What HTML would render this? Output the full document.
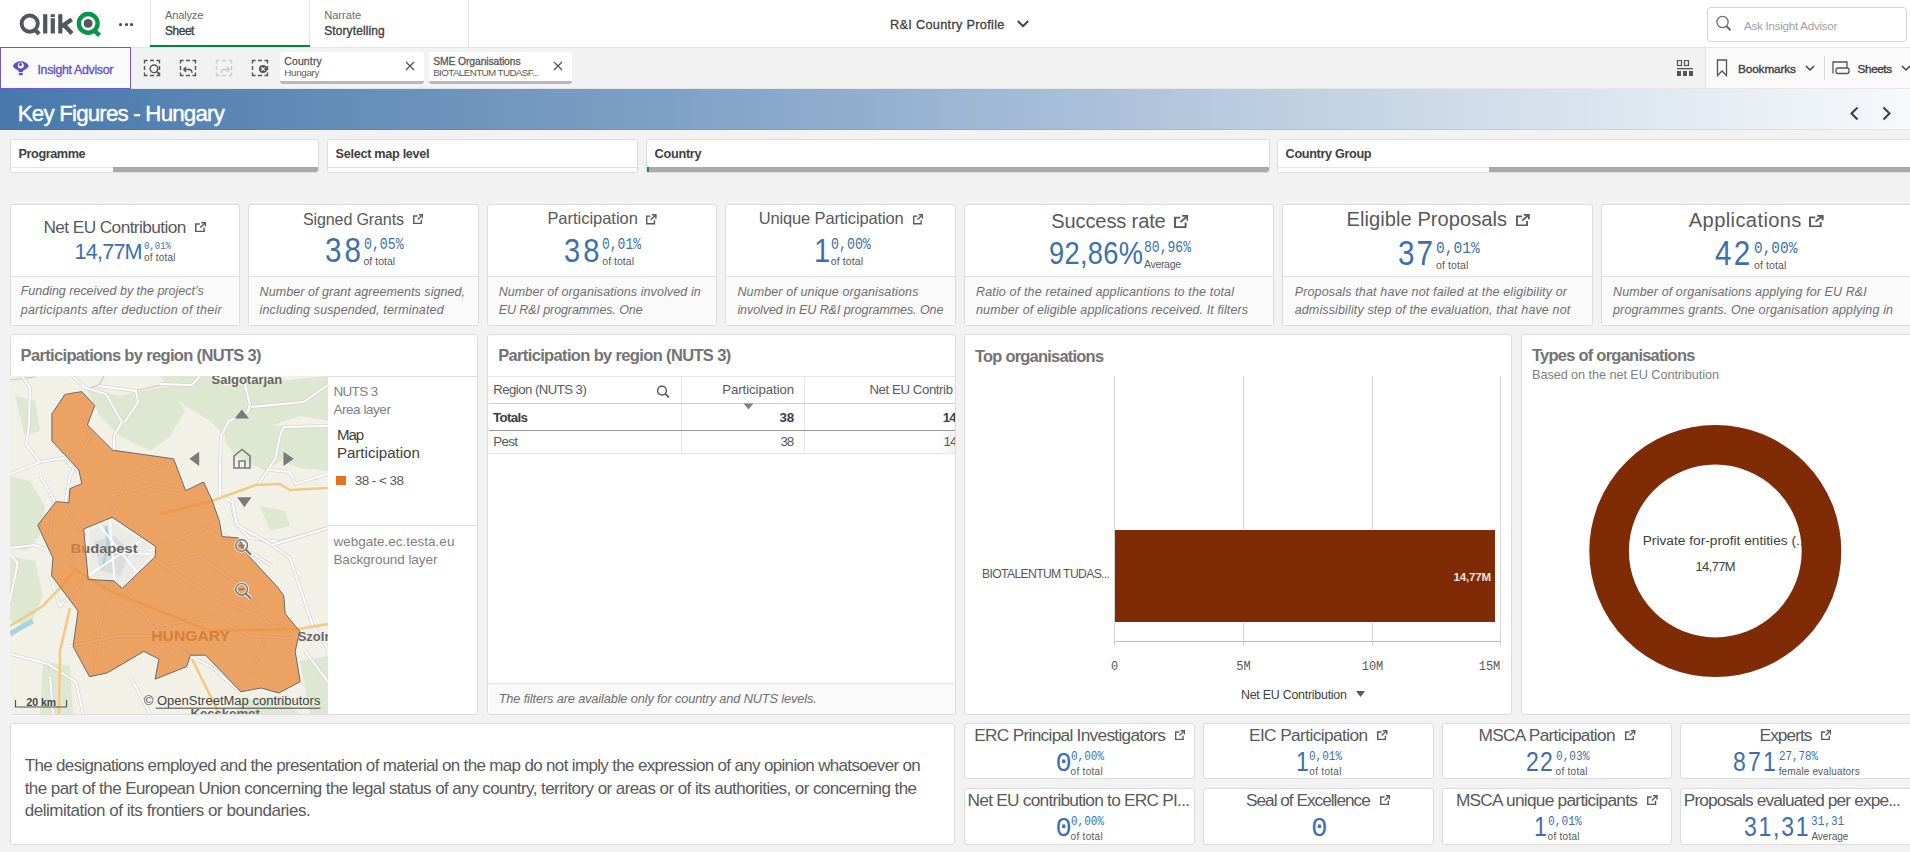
<!DOCTYPE html>
<html><head><meta charset="utf-8">
<style>
*{box-sizing:border-box;margin:0;padding:0}
html,body{width:1910px;height:852px;overflow:hidden;background:#f2f2f2;font-family:"Liberation Sans",sans-serif;color:#404040}
.a{position:absolute}
.t{white-space:nowrap}
.card{background:#fff;border:1px solid #dcdcdc;border-radius:3px;overflow:hidden}
</style></head><body>
<div class="a" style="left:0px;top:0px;width:1910px;height:47px;background:#fff"></div>
<div class="a" style="left:0px;top:47px;width:1910px;height:1px;background:#e3e3e3"></div>
<svg class="a" style="left:0;top:0" width="110" height="45" viewBox="0 0 110 45">
<circle cx="29.7" cy="23.6" r="8.1" fill="none" stroke="#54565b" stroke-width="3.9"/>
<path d="M34.5 29.5 L39.2 34" stroke="#54565b" stroke-width="4.2"/>
<rect x="43.1" y="14.2" width="4.2" height="19.3" fill="#54565b"/>
<rect x="50.7" y="14.2" width="4.2" height="2.8" fill="#54565b"/>
<rect x="50.7" y="18.2" width="4.2" height="15.3" fill="#54565b"/>
<rect x="58.2" y="14.2" width="4.2" height="19.3" fill="#54565b"/>
<path d="M61.5 26.5 L71.8 19.4 M63.8 24.8 L72 33.5" stroke="#54565b" stroke-width="4.3"/>
<circle cx="88.2" cy="23.4" r="9.35" fill="none" stroke="#009845" stroke-width="4.4"/>
<circle cx="88.1" cy="23.4" r="4.4" fill="#54565b"/>
<path d="M93.8 30.2 L99.6 35.4" stroke="#009845" stroke-width="4.4"/>
<circle cx="100.3" cy="15.5" r="1" fill="none" stroke="#ccc" stroke-width="0.4"/>
</svg>
<div class="a" style="left:119px;top:22.5px;width:3px;height:3px;border-radius:2px;background:#404040"></div>
<div class="a" style="left:124.5px;top:22.5px;width:3px;height:3px;border-radius:2px;background:#404040"></div>
<div class="a" style="left:130px;top:22.5px;width:3px;height:3px;border-radius:2px;background:#404040"></div>
<div class="a" style="left:150px;top:0px;width:1px;height:47px;background:#e6e6e6"></div>
<div class="a" style="left:309px;top:0px;width:1px;height:47px;background:#e6e6e6"></div>
<div class="a" style="left:468px;top:0px;width:1px;height:47px;background:#e6e6e6"></div>
<div class="a" style="left:150px;top:45px;width:160px;height:2px;background:#00873d"></div>
<div class="a t" style="left:165.00px;top:8.45px;font-size:11.1px;line-height:14px;color:#6a6a6a;letter-spacing:-0.195px;">Analyze</div>
<div class="a t" style="left:165.00px;top:23.97px;font-size:11.9px;line-height:15px;color:#404040;letter-spacing:-0.418px;-webkit-text-stroke:0.35px #404040;">Sheet</div>
<div class="a t" style="left:324.20px;top:8.45px;font-size:11.1px;line-height:14px;color:#6a6a6a;letter-spacing:0.001px;">Narrate</div>
<div class="a t" style="left:324.20px;top:23.97px;font-size:11.9px;line-height:15px;color:#404040;letter-spacing:0.153px;-webkit-text-stroke:0.35px #404040;">Storytelling</div>
<div class="a t" style="left:890.00px;top:17.00px;font-size:12.7px;line-height:16px;color:#404040;letter-spacing:0.323px;-webkit-text-stroke:0.3px #404040;">R&amp;I Country Profile</div>
<svg class="a" style="left:1016px;top:19px" width="14" height="10" viewBox="0 0 14 10"><path d="M1.8 2 L7 7.2 L12.2 2" fill="none" stroke="#404040" stroke-width="2"/></svg>
<div class="a" style="left:1707px;top:7px;width:200px;height:35px;border:1px solid #d4d4d4;border-radius:4px;background:#fff"></div>
<svg class="a" style="left:1715px;top:15px" width="18" height="18" viewBox="0 0 18 18"><circle cx="7.5" cy="7" r="5.6" fill="none" stroke="#6b6b6b" stroke-width="1.3"/><path d="M11.3 11 L15.5 15.3" stroke="#6b6b6b" stroke-width="2"/></svg>
<div class="a t" style="left:1744.00px;top:18.61px;font-size:11.5px;line-height:14px;color:#a0a0a0;letter-spacing:-0.211px;">Ask Insight Advisor</div>
<div class="a" style="left:0px;top:48px;width:1910px;height:40px;background:#f2f2f2"></div>
<div class="a" style="left:0px;top:88px;width:1910px;height:1px;background:#e6e6e6"></div>
<div class="a" style="left:0px;top:47px;width:131px;height:42px;border:1px solid #6e5ad0;background:#fafafa"></div>
<svg class="a" style="left:12px;top:59px" width="18" height="18" viewBox="0 0 18 18">
<path d="M0.8 7 C4 0.8 13.6 0.8 16.8 7 C13.6 13.2 4 13.2 0.8 7Z" fill="#5e4fc9"/>
<circle cx="8.8" cy="6.4" r="3" fill="#fafafa"/><circle cx="8.4" cy="5.6" r="1.5" fill="#5e4fc9"/>
<path d="M6 11 L11.6 11 L10.6 13.2 L7 13.2Z" fill="#5e4fc9"/>
<rect x="6.6" y="14" width="4.4" height="2.2" rx="1.1" fill="#5e4fc9"/>
</svg>
<div class="a t" style="left:37.50px;top:61.60px;font-size:12.4px;line-height:16px;color:#5e4fc9;letter-spacing:-0.340px;-webkit-text-stroke:0.3px #5e4fc9;">Insight Advisor</div>
<svg class="a" style="left:143px;top:59px" width="132" height="18" viewBox="0 0 132 18">
<g fill="none" stroke="#555" stroke-width="1.4" stroke-dasharray="6 2.5 4 2.5" stroke-dashoffset="3">
<rect x="1.5" y="1.5" width="15" height="15"/>
<rect x="37.5" y="1.5" width="15" height="15"/>
<rect x="109.5" y="1.5" width="15" height="15"/>
</g>
<rect x="73.5" y="1.5" width="15" height="15" fill="none" stroke="#ccc" stroke-width="1.4" stroke-dasharray="6 2.5 4 2.5" stroke-dashoffset="3"/>
<circle cx="11" cy="9.8" r="3.8" fill="none" stroke="#555" stroke-width="1.4"/><path d="M13.8 12.6 L16.8 15.6" stroke="#555" stroke-width="1.7"/>
<path d="M40.5 10.5 L43 8 M40.5 10.5 L43 13 M40.5 10.5 L46 10.5 Q49 10.5 49 14" fill="none" stroke="#555" stroke-width="1.3"/>
<path d="M86.5 10.5 L84 8 M86.5 10.5 L84 13 M86.5 10.5 L81 10.5 Q78 10.5 78 14" fill="none" stroke="#ccc" stroke-width="1.3"/>
<circle cx="120" cy="10" r="4" fill="#555"/><path d="M118.3 8.3 L121.7 11.7 M121.7 8.3 L118.3 11.7" stroke="#fff" stroke-width="1.1"/>
</svg>
<div class="a" style="left:280px;top:52px;width:144px;height:32px;background:#fff;border-radius:3px;overflow:hidden"><div style="position:absolute;left:0;right:0;bottom:0;height:3px;background:#b9b9b9"></div></div>
<div class="a t" style="left:284.20px;top:55.19px;font-size:10.4px;line-height:13px;color:#595959;letter-spacing:0.203px;-webkit-text-stroke:0.3px #595959;">Country</div>
<div class="a t" style="left:284.20px;top:66.80px;font-size:9.8px;line-height:12px;color:#595959;letter-spacing:-0.288px;">Hungary</div>
<svg class="a" style="left:403.8px;top:60px" width="12" height="12" viewBox="0 0 12 12"><path d="M2 2 L10 10 M10 2 L2 10" stroke="#595959" stroke-width="1.4"/></svg>
<div class="a" style="left:429px;top:52px;width:143px;height:32px;background:#fff;border-radius:3px;overflow:hidden"><div style="position:absolute;left:0;right:0;bottom:0;height:3px;background:#b9b9b9"></div></div>
<div class="a t" style="left:433.20px;top:55.19px;font-size:10.4px;line-height:13px;color:#595959;letter-spacing:-0.132px;-webkit-text-stroke:0.3px #595959;">SME Organisations</div>
<div class="a t" style="left:433.20px;top:66.80px;font-size:9.8px;line-height:12px;color:#595959;letter-spacing:-0.597px;">BIOTALENTUM TUDASF...</div>
<svg class="a" style="left:551.5px;top:60px" width="12" height="12" viewBox="0 0 12 12"><path d="M2 2 L10 10 M10 2 L2 10" stroke="#595959" stroke-width="1.4"/></svg>
<svg class="a" style="left:1676px;top:60px" width="18" height="17" viewBox="0 0 18 17">
<rect x="1.5" y="0.5" width="4" height="5" fill="none" stroke="#555" stroke-width="1.2"/>
<rect x="8.5" y="0.5" width="4" height="5" fill="none" stroke="#555" stroke-width="1.2"/>
<rect x="1" y="8" width="16" height="1.3" fill="#555"/>
<rect x="1" y="11" width="4" height="5" fill="#555"/><rect x="7" y="11" width="4" height="5" fill="#555"/><rect x="13" y="11" width="4" height="5" fill="#555"/>
</svg>
<div class="a" style="left:1705px;top:48px;width:205px;height:40px;background:#fafafa;border-left:1px solid #e3e3e3"></div>
<svg class="a" style="left:1715px;top:59px" width="14" height="18" viewBox="0 0 14 18"><path d="M2.5 1 L11.5 1 L11.5 16.5 L7 12 L2.5 16.5 Z" fill="none" stroke="#555" stroke-width="1.3"/></svg>
<div class="a t" style="left:1738.00px;top:61.61px;font-size:11.8px;line-height:15px;color:#404040;letter-spacing:-0.125px;-webkit-text-stroke:0.35px #404040;">Bookmarks</div>
<svg class="a" style="left:1804px;top:63px" width="12" height="10" viewBox="0 0 12 10"><path d="M2 3 L6 7 L10 3" fill="none" stroke="#404040" stroke-width="1.5"/></svg>
<div class="a" style="left:1824px;top:56px;width:1px;height:24px;background:#d9d9d9"></div>
<svg class="a" style="left:1832px;top:61px" width="18" height="14" viewBox="0 0 18 14"><path d="M1 12.5 L1 1 L15 1 L15 7" fill="none" stroke="#555" stroke-width="1.3"/><rect x="4" y="7" width="13" height="5.5" rx="2" fill="none" stroke="#555" stroke-width="1.3"/></svg>
<div class="a t" style="left:1857.60px;top:61.61px;font-size:11.8px;line-height:15px;color:#404040;letter-spacing:-0.445px;-webkit-text-stroke:0.35px #404040;">Sheets</div>
<svg class="a" style="left:1900px;top:63px" width="12" height="10" viewBox="0 0 12 10"><path d="M2 3 L6 7 L10 3" fill="none" stroke="#404040" stroke-width="1.5"/></svg>
<div class="a" style="left:0px;top:89px;width:1910px;height:41px;background:linear-gradient(90deg,#4779ac 0%,#7fa0c6 35%,#c3d3e4 70%,#f7f9fb 100%)"></div>
<div class="a" style="left:0px;top:129px;width:1910px;height:1px;background:rgba(0,0,0,0.07)"></div>
<div class="a t" style="left:17.80px;top:100.37px;font-size:22.3px;line-height:28px;color:#fff;letter-spacing:-0.803px;-webkit-text-stroke:0.4px #fff;">Key Figures - Hungary</div>
<svg class="a" style="left:1848px;top:105.5px" width="50" height="16" viewBox="0 0 50 16"><path d="M9.5 1.5 L3.5 7.5 L9.5 13.5 M35.5 1.5 L41.5 7.5 L35.5 13.5" fill="none" stroke="#404040" stroke-width="2.1"/></svg>
<div class="a card" style="left:10px;top:139px;width:309px;height:34px;border-color:#dcdcdc"></div>
<div class="a t" style="left:18.60px;top:146.20px;font-size:12.7px;line-height:16px;color:#404040;font-weight:bold;letter-spacing:-0.439px;">Programme</div>
<div class="a" style="left:11px;top:167px;width:307px;height:5px;background:#fff;border-top:1px solid #e6e6e6"></div>
<div class="a" style="left:113px;top:167px;width:205px;height:5px;background:#aaaaaa;border-radius:0 0 2px 0"></div>
<div class="a card" style="left:327px;top:139px;width:311px;height:34px;border-color:#dcdcdc"></div>
<div class="a t" style="left:335.60px;top:146.20px;font-size:12.7px;line-height:16px;color:#404040;font-weight:bold;letter-spacing:-0.316px;">Select map level</div>
<div class="a" style="left:328px;top:167px;width:309px;height:1px;background:#e0e0e0"></div>
<div class="a card" style="left:646px;top:139px;width:624px;height:34px;border-color:#dcdcdc"></div>
<div class="a t" style="left:654.60px;top:146.20px;font-size:12.7px;line-height:16px;color:#404040;font-weight:bold;letter-spacing:-0.272px;">Country</div>
<div class="a" style="left:647px;top:167px;width:622px;height:5px;background:#fff;border-top:1px solid #e6e6e6"></div>
<div class="a" style="left:647px;top:167px;width:622px;height:5px;background:#aaaaaa;border-radius:0 0 2px 0"></div>
<div class="a" style="left:647px;top:167px;width:2px;height:5px;background:#009845"></div>
<div class="a card" style="left:1277px;top:139px;width:641px;height:34px;border-color:#dcdcdc"></div>
<div class="a t" style="left:1285.60px;top:146.20px;font-size:12.7px;line-height:16px;color:#404040;font-weight:bold;letter-spacing:-0.351px;">Country Group</div>
<div class="a" style="left:1278px;top:167px;width:639px;height:5px;background:#fff;border-top:1px solid #e6e6e6"></div>
<div class="a" style="left:1489px;top:167px;width:428px;height:5px;background:#aaaaaa;border-radius:0 0 2px 0"></div>
<div class="a card" style="left:10px;top:204px;width:230px;height:122px;"></div>
<div class="a" style="left:11px;top:276px;width:228px;height:49px;background:#fafafa;border-top:1px solid #e0e0e0"></div>
<div class="a t" style="left:43.40px;top:215.60px;font-size:17.3px;line-height:22px;color:#595959;letter-spacing:-0.594px;">Net EU Contribution</div>
<svg class="a" style="left:194.7px;top:222px" width="11.300000000000011" height="10" viewBox="0 0 13 13" preserveAspectRatio="none"><path d="M5.6 2.6 H0.9 V12.1 H10.4 V7.6" fill="none" stroke="#595959" stroke-width="1.7"/><path d="M5.8 7.2 L11.2 1.8" fill="none" stroke="#595959" stroke-width="1.7"/><path d="M7.3 0.9 H12.1 V5.8" fill="none" stroke="#595959" stroke-width="1.8"/></svg>
<div class="a t" style="left:74.60px;top:237.61px;font-size:21.6px;line-height:27px;color:#3d70ab;letter-spacing:-0.805px;transform:scaleX(1.0000);transform-origin:0 0;">14,77M</div>
<div class="a t" style="left:144.00px;top:239.03px;font-size:10.8px;line-height:14px;color:#3d70ab;font-family:'Liberation Mono',monospace;transform:scaleX(0.8334);transform-origin:0 0;">0,01%</div>
<div class="a t" style="left:144.00px;top:251.93px;font-size:10px;line-height:12px;color:#595959;letter-spacing:0.211px;">of total</div>
<div class="a t" style="left:20.70px;top:283.27px;font-size:12.5px;line-height:16px;color:#6f6f6f;font-style:italic;letter-spacing:-0.007px;">Funding received by the project’s</div>
<div class="a t" style="left:20.70px;top:301.67px;font-size:12.5px;line-height:16px;color:#6f6f6f;font-style:italic;letter-spacing:0.256px;">participants after deduction of their</div>
<div class="a card" style="left:248px;top:204px;width:231px;height:122px;"></div>
<div class="a" style="left:249px;top:276px;width:229px;height:49px;background:#fafafa;border-top:1px solid #e0e0e0"></div>
<div class="a t" style="left:303.00px;top:208.72px;font-size:16.1px;line-height:20px;color:#595959;letter-spacing:-0.157px;">Signed Grants</div>
<svg class="a" style="left:412.8px;top:214px" width="10.5" height="10" viewBox="0 0 13 13" preserveAspectRatio="none"><path d="M5.6 2.6 H0.9 V12.1 H10.4 V7.6" fill="none" stroke="#595959" stroke-width="1.7"/><path d="M5.8 7.2 L11.2 1.8" fill="none" stroke="#595959" stroke-width="1.7"/><path d="M7.3 0.9 H12.1 V5.8" fill="none" stroke="#595959" stroke-width="1.8"/></svg>
<div class="a t" style="left:325.00px;top:229.14px;font-size:34.5px;line-height:43px;color:#3d70ab;letter-spacing:3.486px;transform:scaleX(0.8600);transform-origin:0 0;">38</div>
<div class="a t" style="left:363.50px;top:235.17px;font-size:15.9px;line-height:20px;color:#3d70ab;font-family:'Liberation Mono',monospace;transform:scaleX(0.8305);transform-origin:0 0;">0,05%</div>
<div class="a t" style="left:363.50px;top:255.46px;font-size:10.5px;line-height:13px;color:#595959;letter-spacing:0.026px;">of total</div>
<div class="a t" style="left:259.60px;top:283.77px;font-size:12.5px;line-height:16px;color:#6f6f6f;font-style:italic;letter-spacing:0.055px;">Number of grant agreements signed,</div>
<div class="a t" style="left:259.60px;top:301.77px;font-size:12.5px;line-height:16px;color:#6f6f6f;font-style:italic;letter-spacing:0.134px;">including suspended, terminated</div>
<div class="a card" style="left:487px;top:204px;width:230px;height:122px;"></div>
<div class="a" style="left:488px;top:276px;width:228px;height:49px;background:#fafafa;border-top:1px solid #e0e0e0"></div>
<div class="a t" style="left:547.40px;top:208.38px;font-size:16.5px;line-height:21px;color:#595959;letter-spacing:-0.025px;">Participation</div>
<svg class="a" style="left:646.4px;top:214px" width="10.600000000000023" height="10.5" viewBox="0 0 13 13" preserveAspectRatio="none"><path d="M5.6 2.6 H0.9 V12.1 H10.4 V7.6" fill="none" stroke="#595959" stroke-width="1.7"/><path d="M5.8 7.2 L11.2 1.8" fill="none" stroke="#595959" stroke-width="1.7"/><path d="M7.3 0.9 H12.1 V5.8" fill="none" stroke="#595959" stroke-width="1.8"/></svg>
<div class="a t" style="left:564.00px;top:229.38px;font-size:33.8px;line-height:42px;color:#3d70ab;letter-spacing:3.687px;transform:scaleX(0.8600);transform-origin:0 0;">38</div>
<div class="a t" style="left:602.30px;top:235.17px;font-size:15.9px;line-height:20px;color:#3d70ab;font-family:'Liberation Mono',monospace;transform:scaleX(0.8180);transform-origin:0 0;">0,01%</div>
<div class="a t" style="left:602.30px;top:255.26px;font-size:10.5px;line-height:13px;color:#595959;letter-spacing:0.026px;">of total</div>
<div class="a t" style="left:498.70px;top:283.77px;font-size:12.5px;line-height:16px;color:#6f6f6f;font-style:italic;letter-spacing:0.097px;">Number of organisations involved in</div>
<div class="a t" style="left:498.70px;top:301.77px;font-size:12.5px;line-height:16px;color:#6f6f6f;font-style:italic;letter-spacing:-0.090px;">EU R&amp;I programmes. One</div>
<div class="a card" style="left:725px;top:204px;width:231px;height:122px;"></div>
<div class="a" style="left:726px;top:276px;width:229px;height:49px;background:#fafafa;border-top:1px solid #e0e0e0"></div>
<div class="a t" style="left:758.70px;top:208.38px;font-size:16.5px;line-height:21px;color:#595959;letter-spacing:-0.141px;">Unique Participation</div>
<svg class="a" style="left:912.8px;top:214px" width="10.200000000000045" height="10.5" viewBox="0 0 13 13" preserveAspectRatio="none"><path d="M5.6 2.6 H0.9 V12.1 H10.4 V7.6" fill="none" stroke="#595959" stroke-width="1.7"/><path d="M5.8 7.2 L11.2 1.8" fill="none" stroke="#595959" stroke-width="1.7"/><path d="M7.3 0.9 H12.1 V5.8" fill="none" stroke="#595959" stroke-width="1.8"/></svg>
<div class="a t" style="left:814.00px;top:229.38px;font-size:33.8px;line-height:42px;color:#3d70ab;transform:scaleX(0.8600);transform-origin:0 0;">1</div>
<div class="a t" style="left:830.80px;top:235.17px;font-size:15.9px;line-height:20px;color:#3d70ab;font-family:'Liberation Mono',monospace;transform:scaleX(0.8347);transform-origin:0 0;">0,00%</div>
<div class="a t" style="left:830.80px;top:255.26px;font-size:10.5px;line-height:13px;color:#595959;letter-spacing:0.097px;">of total</div>
<div class="a t" style="left:737.40px;top:283.77px;font-size:12.5px;line-height:16px;color:#6f6f6f;font-style:italic;letter-spacing:0.131px;">Number of unique organisations</div>
<div class="a t" style="left:737.40px;top:301.77px;font-size:12.5px;line-height:16px;color:#6f6f6f;font-style:italic;letter-spacing:-0.073px;">involved in EU R&amp;I programmes. One</div>
<div class="a card" style="left:964px;top:204px;width:310px;height:122px;"></div>
<div class="a" style="left:965px;top:276px;width:308px;height:49px;background:#fafafa;border-top:1px solid #e0e0e0"></div>
<div class="a t" style="left:1051.30px;top:209.03px;font-size:20.1px;line-height:25px;color:#595959;letter-spacing:-0.150px;">Success rate</div>
<svg class="a" style="left:1173.9px;top:215.3px" width="14.5" height="13.0" viewBox="0 0 13 13" preserveAspectRatio="none"><path d="M5.6 2.6 H0.9 V12.1 H10.4 V7.6" fill="none" stroke="#595959" stroke-width="1.7"/><path d="M5.8 7.2 L11.2 1.8" fill="none" stroke="#595959" stroke-width="1.7"/><path d="M7.3 0.9 H12.1 V5.8" fill="none" stroke="#595959" stroke-width="1.8"/></svg>
<div class="a t" style="left:1048.50px;top:233.31px;font-size:31.7px;line-height:40px;color:#3d70ab;letter-spacing:0.366px;transform:scaleX(0.8600);transform-origin:0 0;">92,86%</div>
<div class="a t" style="left:1144.00px;top:238.04px;font-size:16.4px;line-height:20px;color:#3d70ab;font-family:'Liberation Mono',monospace;transform:scaleX(0.7964);transform-origin:0 0;">80,96%</div>
<div class="a t" style="left:1144.00px;top:258.16px;font-size:10.5px;line-height:13px;color:#595959;letter-spacing:-0.320px;">Average</div>
<div class="a t" style="left:976.00px;top:283.87px;font-size:12.5px;line-height:16px;color:#6f6f6f;font-style:italic;letter-spacing:0.152px;">Ratio of the retained applicantions to the total</div>
<div class="a t" style="left:976.00px;top:301.97px;font-size:12.5px;line-height:16px;color:#6f6f6f;font-style:italic;letter-spacing:0.116px;">number of eligible applications received. It filters</div>
<div class="a card" style="left:1282px;top:204px;width:311px;height:122px;"></div>
<div class="a" style="left:1283px;top:276px;width:309px;height:49px;background:#fafafa;border-top:1px solid #e0e0e0"></div>
<div class="a t" style="left:1346.60px;top:206.53px;font-size:20.1px;line-height:25px;color:#595959;letter-spacing:0.046px;">Eligible Proposals</div>
<svg class="a" style="left:1516px;top:214px" width="13.799999999999955" height="12" viewBox="0 0 13 13" preserveAspectRatio="none"><path d="M5.6 2.6 H0.9 V12.1 H10.4 V7.6" fill="none" stroke="#595959" stroke-width="1.7"/><path d="M5.8 7.2 L11.2 1.8" fill="none" stroke="#595959" stroke-width="1.7"/><path d="M7.3 0.9 H12.1 V5.8" fill="none" stroke="#595959" stroke-width="1.8"/></svg>
<div class="a t" style="left:1397.60px;top:231.84px;font-size:34.5px;line-height:43px;color:#3d70ab;letter-spacing:2.323px;transform:scaleX(0.8600);transform-origin:0 0;">37</div>
<div class="a t" style="left:1436.00px;top:237.77px;font-size:17.4px;line-height:22px;color:#3d70ab;font-family:'Liberation Mono',monospace;transform:scaleX(0.8356);transform-origin:0 0;">0,01%</div>
<div class="a t" style="left:1436.00px;top:259.16px;font-size:10.5px;line-height:13px;color:#595959;letter-spacing:0.111px;">of total</div>
<div class="a t" style="left:1294.70px;top:283.87px;font-size:12.5px;line-height:16px;color:#6f6f6f;font-style:italic;letter-spacing:0.148px;">Proposals that have not failed at the eligibility or</div>
<div class="a t" style="left:1294.70px;top:301.97px;font-size:12.5px;line-height:16px;color:#6f6f6f;font-style:italic;letter-spacing:0.132px;">admissibility step of the evaluation, that have not</div>
<div class="a card" style="left:1601px;top:204px;width:317px;height:122px;"></div>
<div class="a" style="left:1602px;top:276px;width:315px;height:49px;background:#fafafa;border-top:1px solid #e0e0e0"></div>
<div class="a t" style="left:1688.80px;top:207.53px;font-size:20.1px;line-height:25px;color:#595959;letter-spacing:0.387px;">Applications</div>
<svg class="a" style="left:1809.4px;top:214.5px" width="14.599999999999909" height="12.0" viewBox="0 0 13 13" preserveAspectRatio="none"><path d="M5.6 2.6 H0.9 V12.1 H10.4 V7.6" fill="none" stroke="#595959" stroke-width="1.7"/><path d="M5.8 7.2 L11.2 1.8" fill="none" stroke="#595959" stroke-width="1.7"/><path d="M7.3 0.9 H12.1 V5.8" fill="none" stroke="#595959" stroke-width="1.8"/></svg>
<div class="a t" style="left:1715.00px;top:232.04px;font-size:34.5px;line-height:43px;color:#3d70ab;letter-spacing:2.672px;transform:scaleX(0.8600);transform-origin:0 0;">42</div>
<div class="a t" style="left:1754.00px;top:237.77px;font-size:17.4px;line-height:22px;color:#3d70ab;font-family:'Liberation Mono',monospace;transform:scaleX(0.8298);transform-origin:0 0;">0,00%</div>
<div class="a t" style="left:1754.00px;top:259.16px;font-size:10.5px;line-height:13px;color:#595959;letter-spacing:0.111px;">of total</div>
<div class="a t" style="left:1613.00px;top:283.87px;font-size:12.5px;line-height:16px;color:#6f6f6f;font-style:italic;letter-spacing:0.102px;">Number of organisations applying for EU R&amp;I</div>
<div class="a t" style="left:1613.00px;top:301.97px;font-size:12.5px;line-height:16px;color:#6f6f6f;font-style:italic;letter-spacing:0.136px;">programmes grants. One organisation applying in</div>
<div class="a card" style="left:10px;top:334px;width:468px;height:381px;"></div>
<div class="a t" style="left:20.60px;top:345.48px;font-size:16.5px;line-height:21px;color:#737373;font-weight:bold;letter-spacing:-0.663px;">Participations by region (NUTS 3)</div>
<div class="a" style="left:328px;top:376px;width:150px;height:1px;background:#dcdcdc"></div>
<div class="a" style="left:328px;top:525px;width:150px;height:1px;background:#dcdcdc"></div>
<svg class="a" style="left:10px;top:376px" width="318" height="338" viewBox="0 0 318 338"><rect width="318" height="338" fill="#f1f1e8"/><path d="M150 0 L200 0 L215 10 L240 8 L318 0 L318 45 L290 40 L260 50 L240 70 L215 60 L200 45 L175 30 L160 15Z" fill="#dde7d1"/><path d="M215 45 L270 50 L318 50 L318 95 L290 92 L270 85 L255 95 L225 80 L215 65Z" fill="#dde7d1"/><path d="M76 12 L110 20 L130 15 L160 10 L175 35 L160 60 L140 75 L110 60 L90 40Z" fill="#dde7d1"/><path d="M0 100 L20 105 L35 130 L30 160 L15 175 L0 170Z" fill="#dde7d1"/><path d="M0 180 L25 185 L33 220 L20 250 L0 245Z" fill="#dde7d1"/><path d="M33 285 L60 290 L63 338 L30 338Z" fill="#dde7d1"/><path d="M5 20 L25 25 L30 55 L15 60Z" fill="#dde7d1"/><path d="M250 130 L275 135 L280 150 L260 155Z" fill="#dde7d1"/><path d="M290 285 L318 280 L318 338 L300 338Z" fill="#dde7d1"/><path d="M230 325 L270 320 L290 338 L225 338Z" fill="#dde7d1"/><path d="M80 155 L100 145 L140 170 L140 180 L112 210 L80 200Z" fill="#eaeae6"/><path d="M84 165 L105 160 L120 175 L110 200 L90 195Z" fill="#dcdcdc"/><path d="M96 150 L98 168 L93 190" fill="none" stroke="#aad3df" stroke-width="3"/><path d="M75 175 L140 178 M100 145 L105 210 M80 198 L138 160 M90 150 L130 200" fill="none" stroke="#fff" stroke-width="1.6"/><path d="M0 258 L15 249 L23 245" fill="none" stroke="#aad3df" stroke-width="5"/><path d="M0 4 L26 1 M80 12 L89 9 L94 0 M89 9 L124 15 L160 7" fill="none" stroke="#d4c0bb" stroke-width="1.2"/><path d="M232.8 0 L239.8 28 L237.8 36 L218.9 45 L210.9 60 L209.9 94 L209.9 120 L220.9 125 L225.8 148 L239.8 162 L269.8 166 L317.7 152" fill="none" stroke="#d2d2d2" stroke-width="3.4"/><path d="M232.8 0 L239.8 28 L237.8 36 L218.9 45 L210.9 60 L209.9 94 L209.9 120 L220.9 125 L225.8 148 L239.8 162 L269.8 166 L317.7 152" fill="none" stroke="#fff" stroke-width="2"/><path d="M240.8 31 L293.7 26 L317.7 9" fill="none" stroke="#d2d2d2" stroke-width="3.4"/><path d="M240.8 31 L293.7 26 L317.7 9" fill="none" stroke="#fff" stroke-width="2"/><path d="M247.8 109 L265.8 82 L269.8 60 L273.7 51 L317.7 50" fill="none" stroke="#d2d2d2" stroke-width="3.4"/><path d="M247.8 109 L265.8 82 L269.8 60 L273.7 51 L317.7 50" fill="none" stroke="#fff" stroke-width="2"/><path d="M259.8 94 L279.7 96 L285.7 108 L317.7 98" fill="none" stroke="#d2d2d2" stroke-width="3.4"/><path d="M259.8 94 L279.7 96 L285.7 108 L317.7 98" fill="none" stroke="#fff" stroke-width="2"/><path d="M150 8 L182 9 L190 0" fill="none" stroke="#d2d2d2" stroke-width="3.4"/><path d="M150 8 L182 9 L190 0" fill="none" stroke="#fff" stroke-width="2"/><path d="M12 0 L20 12 L19 50 L16 68 L30 86 L0 98" fill="none" stroke="#d2d2d2" stroke-width="3.4"/><path d="M12 0 L20 12 L19 50 L16 68 L30 86 L0 98" fill="none" stroke="#fff" stroke-width="2"/><path d="M30 86 L52 82 L68 96" fill="none" stroke="#d2d2d2" stroke-width="3.4"/><path d="M30 86 L52 82 L68 96" fill="none" stroke="#fff" stroke-width="2"/><path d="M30 100 L44 124 L40 160" fill="none" stroke="#d2d2d2" stroke-width="3.4"/><path d="M30 100 L44 124 L40 160" fill="none" stroke="#fff" stroke-width="2"/><path d="M62 0 L76 12 L96 18 L112 46 L104 60 L104 74" fill="none" stroke="#d2d2d2" stroke-width="3.4"/><path d="M62 0 L76 12 L96 18 L112 46 L104 60 L104 74" fill="none" stroke="#fff" stroke-width="2"/><path d="M88 10 L126 15 L128 26 L114 47" fill="none" stroke="#d2d2d2" stroke-width="3.4"/><path d="M88 10 L126 15 L128 26 L114 47" fill="none" stroke="#fff" stroke-width="2"/><path d="M0 172 L25 169 L43 177" fill="none" stroke="#d2d2d2" stroke-width="3.4"/><path d="M0 172 L25 169 L43 177" fill="none" stroke="#fff" stroke-width="2"/><path d="M0 225 L7.6 187 L0 178" fill="none" stroke="#d2d2d2" stroke-width="3.4"/><path d="M0 225 L7.6 187 L0 178" fill="none" stroke="#fff" stroke-width="2"/><path d="M222 124 L227 149 L262 169 L280 182 L303 250 L318 273" fill="none" stroke="#d2d2d2" stroke-width="3.4"/><path d="M222 124 L227 149 L262 169 L280 182 L303 250 L318 273" fill="none" stroke="#fff" stroke-width="2"/><path d="M262 169 L318 152" fill="none" stroke="#d2d2d2" stroke-width="3.4"/><path d="M262 169 L318 152" fill="none" stroke="#fff" stroke-width="2"/><path d="M295 275 L318 306" fill="none" stroke="#d2d2d2" stroke-width="3.4"/><path d="M295 275 L318 306" fill="none" stroke="#fff" stroke-width="2"/><path d="M0 278 L38 288 L66 306 L73 338" fill="none" stroke="#d2d2d2" stroke-width="3.4"/><path d="M0 278 L38 288 L66 306 L73 338" fill="none" stroke="#fff" stroke-width="2"/><path d="M40 301 L43 338" fill="none" stroke="#d2d2d2" stroke-width="3.4"/><path d="M40 301 L43 338" fill="none" stroke="#fff" stroke-width="2"/><path d="M100 120 L140 110 L175 115" fill="none" stroke="#d2d2d2" stroke-width="3.4"/><path d="M100 120 L140 110 L175 115" fill="none" stroke="#fff" stroke-width="2"/><path d="M110 230 L150 250 L200 240 L240 260 L280 262" fill="none" stroke="#d2d2d2" stroke-width="3.4"/><path d="M110 230 L150 250 L200 240 L240 260 L280 262" fill="none" stroke="#fff" stroke-width="2"/><path d="M120 300 L140 338" fill="none" stroke="#d2d2d2" stroke-width="3.4"/><path d="M120 300 L140 338" fill="none" stroke="#fff" stroke-width="2"/><path d="M140 175 L200 150 L262 190" fill="none" stroke="#d2d2d2" stroke-width="3.4"/><path d="M140 175 L200 150 L262 190" fill="none" stroke="#fff" stroke-width="2"/><path d="M143 182 L200 220 L250 240 L289 255" fill="none" stroke="#d2d2d2" stroke-width="3.4"/><path d="M143 182 L200 220 L250 240 L289 255" fill="none" stroke="#fff" stroke-width="2"/><path d="M112 210 L150 260 L180 279" fill="none" stroke="#d2d2d2" stroke-width="3.4"/><path d="M112 210 L150 260 L180 279" fill="none" stroke="#fff" stroke-width="2"/><path d="M103 205 L90 250 L80 300" fill="none" stroke="#d2d2d2" stroke-width="3.4"/><path d="M103 205 L90 250 L80 300" fill="none" stroke="#fff" stroke-width="2"/><path d="M78 200 L50 230 L40 200" fill="none" stroke="#d2d2d2" stroke-width="3.4"/><path d="M78 200 L50 230 L40 200" fill="none" stroke="#fff" stroke-width="2"/><path d="M75 160 L55 130 L60 100 L80 60 L70 30" fill="none" stroke="#d2d2d2" stroke-width="3.4"/><path d="M75 160 L55 130 L60 100 L80 60 L70 30" fill="none" stroke="#fff" stroke-width="2"/><path d="M100 141 L120 100 L160 84" fill="none" stroke="#d2d2d2" stroke-width="3.4"/><path d="M100 141 L120 100 L160 84" fill="none" stroke="#fff" stroke-width="2"/><path d="M150 190 L190 180 L230 210 L260 250 L240 300" fill="none" stroke="#d2d2d2" stroke-width="3.4"/><path d="M150 190 L190 180 L230 210 L260 250 L240 300" fill="none" stroke="#fff" stroke-width="2"/><path d="M160 270 L200 290 L230 316" fill="none" stroke="#d2d2d2" stroke-width="3.4"/><path d="M160 270 L200 290 L230 316" fill="none" stroke="#fff" stroke-width="2"/><path d="M60 270 L110 260 L150 260" fill="none" stroke="#d2d2d2" stroke-width="3.4"/><path d="M60 270 L110 260 L150 260" fill="none" stroke="#fff" stroke-width="2"/><path d="M150 138 L201.9 125 L245.8 109 L269.8 108 L279.7 114 L317.7 112" fill="none" stroke="#f3c983" stroke-width="2.6"/><path d="M0 250 L33 230 L50 212 L67 192" fill="none" stroke="#f3c983" stroke-width="2.6"/><path d="M49 338 L50 275 L60 232" fill="none" stroke="#f3c983" stroke-width="2.6"/><path d="M289 253 L318 248" fill="none" stroke="#f3c983" stroke-width="2.6"/><path d="M182 283 L202 323 L209 338" fill="none" stroke="#f3c983" stroke-width="2.6"/><path d="M60 190 L100 215 L150 235 L200 255 L289 253" fill="none" stroke="#f3c983" stroke-width="2.6"/><text x="60.6" y="177" font-family="Liberation Sans" font-weight="bold" font-size="13.5" fill="#666" textLength="67" lengthAdjust="spacingAndGlyphs">Budapest</text><text x="141.3" y="264.6" font-family="Liberation Sans" font-weight="bold" font-size="14" fill="#a0683a" textLength="78.7" lengthAdjust="spacingAndGlyphs">HUNGARY</text><text x="287.7" y="265.3" font-family="Liberation Sans" font-weight="bold" font-size="13" fill="#666">Szolnok</text><text x="201.5" y="7.8" font-family="Liberation Sans" font-weight="bold" font-size="12.5" fill="#666" textLength="70.7" lengthAdjust="spacingAndGlyphs">Salgotarjan</text><text x="180.4" y="342" font-family="Liberation Sans" font-weight="bold" font-size="13" fill="#666" textLength="69.4" lengthAdjust="spacingAndGlyphs">Kecskemet</text><path d="M54.9 18.4 L71.8 15.6 L84.8 29.5 L77.4 48.9 L102.7 74.2 L163.6 82.8 L175.6 114.7 L193.5 106.0 L201.9 124.0 L209.5 145.5 L212.0 160.6 L228.4 161.9 L237.2 178.3 L267.5 211.1 L273.8 219.9 L275.1 237.6 L289.7 255.2 L285.2 275.4 L290.2 305.7 L268.8 317.0 L251.1 312.0 L230.9 315.8 L195.6 279.2 L180.4 279.2 L176.7 290.6 L145.1 303.2 L148.9 283.0 L133.8 275.4 L97.2 296.9 L79.5 300.7 L63.1 270.4 L68.1 235.0 L41.6 199.7 L42.9 182.0 L27.8 149.2 L45.9 125.7 L58.9 126.7 L59.9 112.7 L71.8 107.7 L68.8 93.8 L41.9 64.8 L41.9 37.9Z M73.7 153.0 L102.2 141.2 L145.9 170.7 L145.1 180.8 L112.3 212.3 L103.5 204.8 L78.2 203.5Z" fill="#ea8534" fill-opacity="0.74" fill-rule="evenodd" stroke="#6a6a6a" stroke-width="1"/><path d="M224.7 42.5 L239 42.5 L231.85 33.4Z" fill="#7a7a7a"/><path d="M179.4 82.8 L189.2 75.7 L189.2 90Z" fill="#7a7a7a"/><path d="M283.8 82.8 L273.5 75.7 L273.5 90Z" fill="#7a7a7a"/><path d="M227.2 121.3 L241.5 121.3 L234.35 131.2Z" fill="#7a7a7a"/><path d="M224 80 L232 73.5 L240 80 L240 92 L224 92Z M229 92 L229 85 L235 85 L235 92" fill="none" stroke="#7a7a7a" stroke-width="1.6"/><circle cx="231.6" cy="169.4" r="5.8" fill="none" stroke="#fff" stroke-width="3"/><path d="M235.6 173.4 L241 178.8" stroke="#fff" stroke-width="4"/><circle cx="231.6" cy="169.4" r="5.8" fill="none" stroke="#7a7a7a" stroke-width="1.6"/><path d="M235.8 173.6 L241 178.8" stroke="#7a7a7a" stroke-width="2.2"/><path d="M228.6 169.4 L234.6 169.4" stroke="#7a7a7a" stroke-width="1.5"/><path d="M231.6 166.4 L231.6 172.4" stroke="#7a7a7a" stroke-width="1.5"/><circle cx="231.6" cy="213.3" r="5.8" fill="none" stroke="#fff" stroke-width="3"/><path d="M235.6 217.3 L241 222.70000000000002" stroke="#fff" stroke-width="4"/><circle cx="231.6" cy="213.3" r="5.8" fill="none" stroke="#7a7a7a" stroke-width="1.6"/><path d="M235.8 217.5 L241 222.70000000000002" stroke="#7a7a7a" stroke-width="2.2"/><path d="M228.6 213.3 L234.6 213.3" stroke="#7a7a7a" stroke-width="1.5"/><path d="M5.5 324 L5.5 331 L56.5 331 L56.5 324" fill="none" stroke="#555" stroke-width="1.2"/><text x="16.4" y="329.7" font-family="Liberation Sans" font-weight="bold" font-size="10.5" fill="#444" textLength="29.6" lengthAdjust="spacingAndGlyphs">20 km</text><text x="133.8" y="329" font-family="Liberation Sans" font-size="12.3" fill="#444" textLength="176.6" lengthAdjust="spacingAndGlyphs">© OpenStreetMap contributors</text><path d="M146 332.2 L310.4 332.2" stroke="#444" stroke-width="1"/></svg>
<div class="a t" style="left:333.40px;top:383.22px;font-size:13.5px;line-height:17px;color:#7f7f7f;letter-spacing:-0.642px;">NUTS 3</div>
<div class="a t" style="left:333.40px;top:401.32px;font-size:13.5px;line-height:17px;color:#7f7f7f;letter-spacing:-0.448px;">Area layer</div>
<div class="a t" style="left:336.90px;top:425.07px;font-size:15.1px;line-height:19px;color:#404040;letter-spacing:-1.081px;">Map</div>
<div class="a t" style="left:336.90px;top:442.77px;font-size:15.1px;line-height:19px;color:#404040;letter-spacing:-0.005px;">Participation</div>
<div class="a" style="left:336px;top:476px;width:9.8px;height:9px;background:#e9711c"></div>
<div class="a t" style="left:354.70px;top:472.42px;font-size:13.5px;line-height:17px;color:#595959;letter-spacing:-0.545px;">38 - &lt; 38</div>
<div class="a t" style="left:333.40px;top:533.42px;font-size:13.5px;line-height:17px;color:#7f7f7f;letter-spacing:0.009px;">webgate.ec.testa.eu</div>
<div class="a t" style="left:333.40px;top:551.12px;font-size:13.5px;line-height:17px;color:#7f7f7f;letter-spacing:-0.071px;">Background layer</div>
<div class="a card" style="left:487px;top:334px;width:469px;height:381px;"></div>
<div class="a t" style="left:498.20px;top:345.38px;font-size:16.5px;line-height:21px;color:#737373;font-weight:bold;letter-spacing:-0.646px;">Participation by region (NUTS 3)</div>
<div class="a" style="left:489px;top:376px;width:466px;height:1px;background:#e6e6e6"></div>
<div class="a" style="left:681px;top:377px;width:1px;height:76px;background:#e6e6e6"></div>
<div class="a" style="left:804px;top:377px;width:1px;height:76px;background:#e6e6e6"></div>
<div class="a" style="left:489px;top:403px;width:466px;height:1px;background:#cfcfcf"></div>
<div class="a" style="left:489px;top:430px;width:466px;height:1px;background:#9a9a9a"></div>
<div class="a" style="left:489px;top:453px;width:466px;height:1px;background:#e6e6e6"></div>
<div class="a t" style="left:493.30px;top:381.82px;font-size:13.2px;line-height:16px;color:#595959;letter-spacing:-0.545px;">Region (NUTS 3)</div>
<svg class="a" style="left:656px;top:385px" width="15" height="13" viewBox="0 0 15 13"><circle cx="6" cy="5.6" r="4.4" fill="none" stroke="#555" stroke-width="1.4"/><path d="M9.2 8.8 L13 12.4" stroke="#555" stroke-width="1.8"/></svg>
<div class="a t" style="left:722.20px;top:381.82px;font-size:13.2px;line-height:16px;color:#595959;letter-spacing:-0.047px;">Participation</div>
<div class="a t" style="left:869.40px;top:381.82px;font-size:13.2px;line-height:16px;color:#595959;letter-spacing:-0.391px;">Net EU Contrib</div>
<svg class="a" style="left:743px;top:403px" width="11" height="7" viewBox="0 0 11 7"><path d="M0.5 0.5 L10.5 0.5 L5.5 6.5Z" fill="#808080"/></svg>
<div class="a t" style="left:493.00px;top:408.75px;font-size:13.4px;line-height:17px;color:#404040;font-weight:bold;letter-spacing:-0.688px;">Totals</div>
<div class="a t" style="left:779.40px;top:408.75px;font-size:13.4px;line-height:17px;color:#404040;font-weight:bold;letter-spacing:-0.094px;">38</div>
<div class="a t" style="left:942.70px;top:408.75px;font-size:13.4px;line-height:17px;color:#404040;font-weight:bold;letter-spacing:-0.933px;">14,77M</div>
<div class="a" style="left:935px;top:431px;width:20px;height:22px;background:linear-gradient(90deg,rgba(0,0,0,0),rgba(0,0,0,0.06))"></div>
<div class="a t" style="left:493.30px;top:433.15px;font-size:13.4px;line-height:17px;color:#595959;letter-spacing:-0.698px;">Pest</div>
<div class="a t" style="left:780.40px;top:433.15px;font-size:13.4px;line-height:17px;color:#595959;letter-spacing:-1.094px;">38</div>
<div class="a t" style="left:943.50px;top:433.15px;font-size:13.4px;line-height:17px;color:#595959;letter-spacing:-0.933px;">14,77M</div>
<div class="a" style="left:956px;top:334px;width:8px;height:381px;background:#f2f2f2"></div>
<div class="a" style="left:955px;top:335px;width:1px;height:379px;background:#dcdcdc"></div>
<div class="a" style="left:489px;top:683px;width:465px;height:31px;background:#fafafa;border-top:1px solid #e0e0e0"></div>
<div class="a t" style="left:498.70px;top:691.06px;font-size:12.8px;line-height:16px;color:#6f6f6f;font-style:italic;letter-spacing:-0.146px;">The filters are available only for country and NUTS levels.</div>
<div class="a card" style="left:964px;top:334px;width:548px;height:381px;"></div>
<div class="a t" style="left:975.00px;top:345.71px;font-size:16.4px;line-height:20px;color:#737373;font-weight:bold;letter-spacing:-0.740px;">Top organisations</div>
<div class="a" style="left:1113.8px;top:376px;width:1px;height:270px;background:#d6d6d6"></div>
<div class="a" style="left:1242.9px;top:376px;width:1px;height:270px;background:#d6d6d6"></div>
<div class="a" style="left:1372.0px;top:376px;width:1px;height:270px;background:#d6d6d6"></div>
<div class="a" style="left:1499.8px;top:376px;width:1px;height:270px;background:#d6d6d6"></div>
<div class="a" style="left:1114px;top:641px;width:386.8px;height:1px;background:#bdbdbd"></div>
<div class="a" style="left:1115px;top:530px;width:380px;height:92px;background:#7f2b05"></div>
<div class="a t" style="left:1453.60px;top:569.61px;font-size:11.5px;line-height:14px;color:#f0e4dc;font-weight:bold;letter-spacing:-0.192px;">14,77M</div>
<div class="a t" style="left:982.00px;top:567.07px;font-size:12.2px;line-height:15px;color:#595959;letter-spacing:-0.654px;">BIOTALENTUM TUDAS...</div>
<div class="a t" style="left:1110.90px;top:660.41px;font-size:12px;line-height:15px;color:#595959;font-family:'Liberation Mono',monospace;">0</div>
<div class="a t" style="left:1236.20px;top:660.41px;font-size:12px;line-height:15px;color:#595959;font-family:'Liberation Mono',monospace;">5M</div>
<div class="a t" style="left:1361.70px;top:660.41px;font-size:12px;line-height:15px;color:#595959;font-family:'Liberation Mono',monospace;">10M</div>
<div class="a t" style="left:1478.70px;top:660.41px;font-size:12px;line-height:15px;color:#595959;font-family:'Liberation Mono',monospace;">15M</div>
<div class="a t" style="left:1241.00px;top:686.80px;font-size:12.4px;line-height:16px;color:#404040;letter-spacing:-0.238px;">Net EU Contribution</div>
<svg class="a" style="left:1355px;top:690px" width="11" height="8" viewBox="0 0 11 8"><path d="M1 1 L10 1 L5.5 7Z" fill="#595959"/></svg>
<div class="a card" style="left:1521px;top:334px;width:397px;height:381px;"></div>
<div class="a t" style="left:1532.00px;top:345.38px;font-size:16.5px;line-height:21px;color:#737373;font-weight:bold;letter-spacing:-0.761px;">Types of organisations</div>
<div class="a t" style="left:1532.00px;top:366.90px;font-size:12.7px;line-height:16px;color:#808080;letter-spacing:-0.065px;">Based on the net EU Contribution</div>
<svg class="a" style="left:1585px;top:421px" width="262" height="262" viewBox="0 0 262 262"><circle cx="130.3" cy="130" r="106.2" fill="none" stroke="#7f2b05" stroke-width="39.6"/></svg>
<div class="a t" style="left:1642.70px;top:531.85px;font-size:13.7px;line-height:17px;color:#404040;letter-spacing:0.016px;">Private for-profit entities (...</div>
<div class="a t" style="left:1695.40px;top:559.13px;font-size:12.9px;line-height:16px;color:#404040;letter-spacing:-0.559px;">14,77M</div>
<div class="a card" style="left:10px;top:723px;width:945px;height:122px;"></div>
<div class="a t" style="left:24.70px;top:755.21px;font-size:17.0px;line-height:21px;color:#595959;letter-spacing:-0.664px;">The designations employed and the presentation of material on the map do not imply the expression of any opinion whatsoever on</div>
<div class="a t" style="left:24.70px;top:777.81px;font-size:17.0px;line-height:21px;color:#595959;letter-spacing:-0.571px;">the part of the European Union concerning the legal status of any country, territory or areas or of its authorities, or concerning the</div>
<div class="a t" style="left:24.70px;top:799.61px;font-size:17.0px;line-height:21px;color:#595959;letter-spacing:-0.469px;">delimitation of its frontiers or boundaries.</div>
<div class="a card" style="left:964px;top:723px;width:231px;height:56px;"></div>
<div class="a t" style="left:974.30px;top:723.80px;font-size:17.3px;line-height:22px;color:#595959;letter-spacing:-0.717px;">ERC Principal Investigators</div>
<svg class="a" style="left:1174.8px;top:730.2px" width="10.100000000000136" height="10.0" viewBox="0 0 13 13" preserveAspectRatio="none"><path d="M5.6 2.6 H0.9 V12.1 H10.4 V7.6" fill="none" stroke="#595959" stroke-width="1.7"/><path d="M5.8 7.2 L11.2 1.8" fill="none" stroke="#595959" stroke-width="1.7"/><path d="M7.3 0.9 H12.1 V5.8" fill="none" stroke="#595959" stroke-width="1.8"/></svg>
<div class="a t" style="left:1055.50px;top:747.21px;font-size:27px;line-height:34px;color:#3d70ab;font-family:'Liberation Mono',monospace;">0</div>
<div class="a t" style="left:1070.60px;top:749.47px;font-size:12.9px;line-height:16px;color:#3d70ab;font-family:'Liberation Mono',monospace;transform:scaleX(0.8532);transform-origin:0 0;">0,00%</div>
<div class="a t" style="left:1070.60px;top:765.93px;font-size:10px;line-height:12px;color:#595959;letter-spacing:0.297px;">of total</div>
<div class="a card" style="left:1203px;top:723px;width:231px;height:56px;"></div>
<div class="a t" style="left:1249.00px;top:723.80px;font-size:17.3px;line-height:22px;color:#595959;letter-spacing:-0.607px;">EIC Participation</div>
<svg class="a" style="left:1377px;top:730.2px" width="10.5" height="10.0" viewBox="0 0 13 13" preserveAspectRatio="none"><path d="M5.6 2.6 H0.9 V12.1 H10.4 V7.6" fill="none" stroke="#595959" stroke-width="1.7"/><path d="M5.8 7.2 L11.2 1.8" fill="none" stroke="#595959" stroke-width="1.7"/><path d="M7.3 0.9 H12.1 V5.8" fill="none" stroke="#595959" stroke-width="1.8"/></svg>
<div class="a t" style="left:1295.50px;top:745.11px;font-size:26.8px;line-height:34px;color:#3d70ab;transform:scaleX(0.8600);transform-origin:0 0;">1</div>
<div class="a t" style="left:1309.30px;top:749.47px;font-size:12.9px;line-height:16px;color:#3d70ab;font-family:'Liberation Mono',monospace;transform:scaleX(0.8532);transform-origin:0 0;">0,01%</div>
<div class="a t" style="left:1309.30px;top:765.93px;font-size:10px;line-height:12px;color:#595959;letter-spacing:0.297px;">of total</div>
<div class="a card" style="left:1442px;top:723px;width:230px;height:56px;"></div>
<div class="a t" style="left:1478.50px;top:723.80px;font-size:17.3px;line-height:22px;color:#595959;letter-spacing:-0.696px;">MSCA Participation</div>
<svg class="a" style="left:1625.2px;top:730.2px" width="10.399999999999864" height="10.0" viewBox="0 0 13 13" preserveAspectRatio="none"><path d="M5.6 2.6 H0.9 V12.1 H10.4 V7.6" fill="none" stroke="#595959" stroke-width="1.7"/><path d="M5.8 7.2 L11.2 1.8" fill="none" stroke="#595959" stroke-width="1.7"/><path d="M7.3 0.9 H12.1 V5.8" fill="none" stroke="#595959" stroke-width="1.8"/></svg>
<div class="a t" style="left:1526.20px;top:745.11px;font-size:26.8px;line-height:34px;color:#3d70ab;letter-spacing:1.473px;transform:scaleX(0.8600);transform-origin:0 0;">22</div>
<div class="a t" style="left:1555.60px;top:749.47px;font-size:12.9px;line-height:16px;color:#3d70ab;font-family:'Liberation Mono',monospace;transform:scaleX(0.8635);transform-origin:0 0;">0,03%</div>
<div class="a t" style="left:1555.60px;top:765.93px;font-size:10px;line-height:12px;color:#595959;letter-spacing:0.283px;">of total</div>
<div class="a card" style="left:1680px;top:723px;width:238px;height:56px;"></div>
<div class="a t" style="left:1759.60px;top:723.80px;font-size:17.3px;line-height:22px;color:#595959;letter-spacing:-0.964px;">Experts</div>
<svg class="a" style="left:1820.7px;top:730.2px" width="10.299999999999955" height="10.0" viewBox="0 0 13 13" preserveAspectRatio="none"><path d="M5.6 2.6 H0.9 V12.1 H10.4 V7.6" fill="none" stroke="#595959" stroke-width="1.7"/><path d="M5.8 7.2 L11.2 1.8" fill="none" stroke="#595959" stroke-width="1.7"/><path d="M7.3 0.9 H12.1 V5.8" fill="none" stroke="#595959" stroke-width="1.8"/></svg>
<div class="a t" style="left:1732.80px;top:745.11px;font-size:26.8px;line-height:34px;color:#3d70ab;letter-spacing:2.471px;transform:scaleX(0.8600);transform-origin:0 0;">871</div>
<div class="a t" style="left:1778.70px;top:749.47px;font-size:12.9px;line-height:16px;color:#3d70ab;font-family:'Liberation Mono',monospace;transform:scaleX(0.8403);transform-origin:0 0;">27,78%</div>
<div class="a t" style="left:1778.70px;top:765.93px;font-size:10px;line-height:12px;color:#595959;letter-spacing:0.129px;">female evaluators</div>
<div class="a card" style="left:964px;top:788px;width:231px;height:57px;"></div>
<div class="a t" style="left:967.60px;top:788.80px;font-size:17.3px;line-height:22px;color:#595959;letter-spacing:-0.757px;">Net EU contribution to ERC PI...</div>
<div class="a t" style="left:1055.50px;top:812.21px;font-size:27px;line-height:34px;color:#3d70ab;font-family:'Liberation Mono',monospace;">0</div>
<div class="a t" style="left:1070.60px;top:814.47px;font-size:12.9px;line-height:16px;color:#3d70ab;font-family:'Liberation Mono',monospace;transform:scaleX(0.8532);transform-origin:0 0;">0,00%</div>
<div class="a t" style="left:1070.60px;top:830.93px;font-size:10px;line-height:12px;color:#595959;letter-spacing:0.297px;">of total</div>
<div class="a card" style="left:1203px;top:788px;width:231px;height:57px;"></div>
<div class="a t" style="left:1246.00px;top:788.80px;font-size:17.3px;line-height:22px;color:#595959;letter-spacing:-1.022px;">Seal of Excellence</div>
<svg class="a" style="left:1379.6px;top:795.2px" width="10.400000000000091" height="10.0" viewBox="0 0 13 13" preserveAspectRatio="none"><path d="M5.6 2.6 H0.9 V12.1 H10.4 V7.6" fill="none" stroke="#595959" stroke-width="1.7"/><path d="M5.8 7.2 L11.2 1.8" fill="none" stroke="#595959" stroke-width="1.7"/><path d="M7.3 0.9 H12.1 V5.8" fill="none" stroke="#595959" stroke-width="1.8"/></svg>
<div class="a t" style="left:1311.30px;top:812.21px;font-size:27px;line-height:34px;color:#3d70ab;font-family:'Liberation Mono',monospace;">0</div>
<div class="a card" style="left:1442px;top:788px;width:230px;height:57px;"></div>
<div class="a t" style="left:1455.90px;top:788.80px;font-size:17.3px;line-height:22px;color:#595959;letter-spacing:-0.730px;">MSCA unique participants</div>
<svg class="a" style="left:1647.3px;top:795.2px" width="10.700000000000045" height="10.0" viewBox="0 0 13 13" preserveAspectRatio="none"><path d="M5.6 2.6 H0.9 V12.1 H10.4 V7.6" fill="none" stroke="#595959" stroke-width="1.7"/><path d="M5.8 7.2 L11.2 1.8" fill="none" stroke="#595959" stroke-width="1.7"/><path d="M7.3 0.9 H12.1 V5.8" fill="none" stroke="#595959" stroke-width="1.8"/></svg>
<div class="a t" style="left:1534.30px;top:810.11px;font-size:26.8px;line-height:34px;color:#3d70ab;transform:scaleX(0.8600);transform-origin:0 0;">1</div>
<div class="a t" style="left:1547.60px;top:814.47px;font-size:12.9px;line-height:16px;color:#3d70ab;font-family:'Liberation Mono',monospace;transform:scaleX(0.8713);transform-origin:0 0;">0,01%</div>
<div class="a t" style="left:1547.60px;top:830.93px;font-size:10px;line-height:12px;color:#595959;letter-spacing:0.283px;">of total</div>
<div class="a card" style="left:1680px;top:788px;width:238px;height:57px;"></div>
<div class="a t" style="left:1683.80px;top:788.80px;font-size:17.3px;line-height:22px;color:#595959;letter-spacing:-0.868px;">Proposals evaluated per expe...</div>
<div class="a t" style="left:1743.60px;top:810.11px;font-size:26.8px;line-height:34px;color:#3d70ab;letter-spacing:1.986px;transform:scaleX(0.8600);transform-origin:0 0;">31,31</div>
<div class="a t" style="left:1811.40px;top:814.47px;font-size:12.9px;line-height:16px;color:#3d70ab;font-family:'Liberation Mono',monospace;transform:scaleX(0.8584);transform-origin:0 0;">31,31</div>
<div class="a t" style="left:1811.40px;top:830.93px;font-size:10px;line-height:12px;color:#595959;letter-spacing:-0.011px;">Average</div>
</body></html>
